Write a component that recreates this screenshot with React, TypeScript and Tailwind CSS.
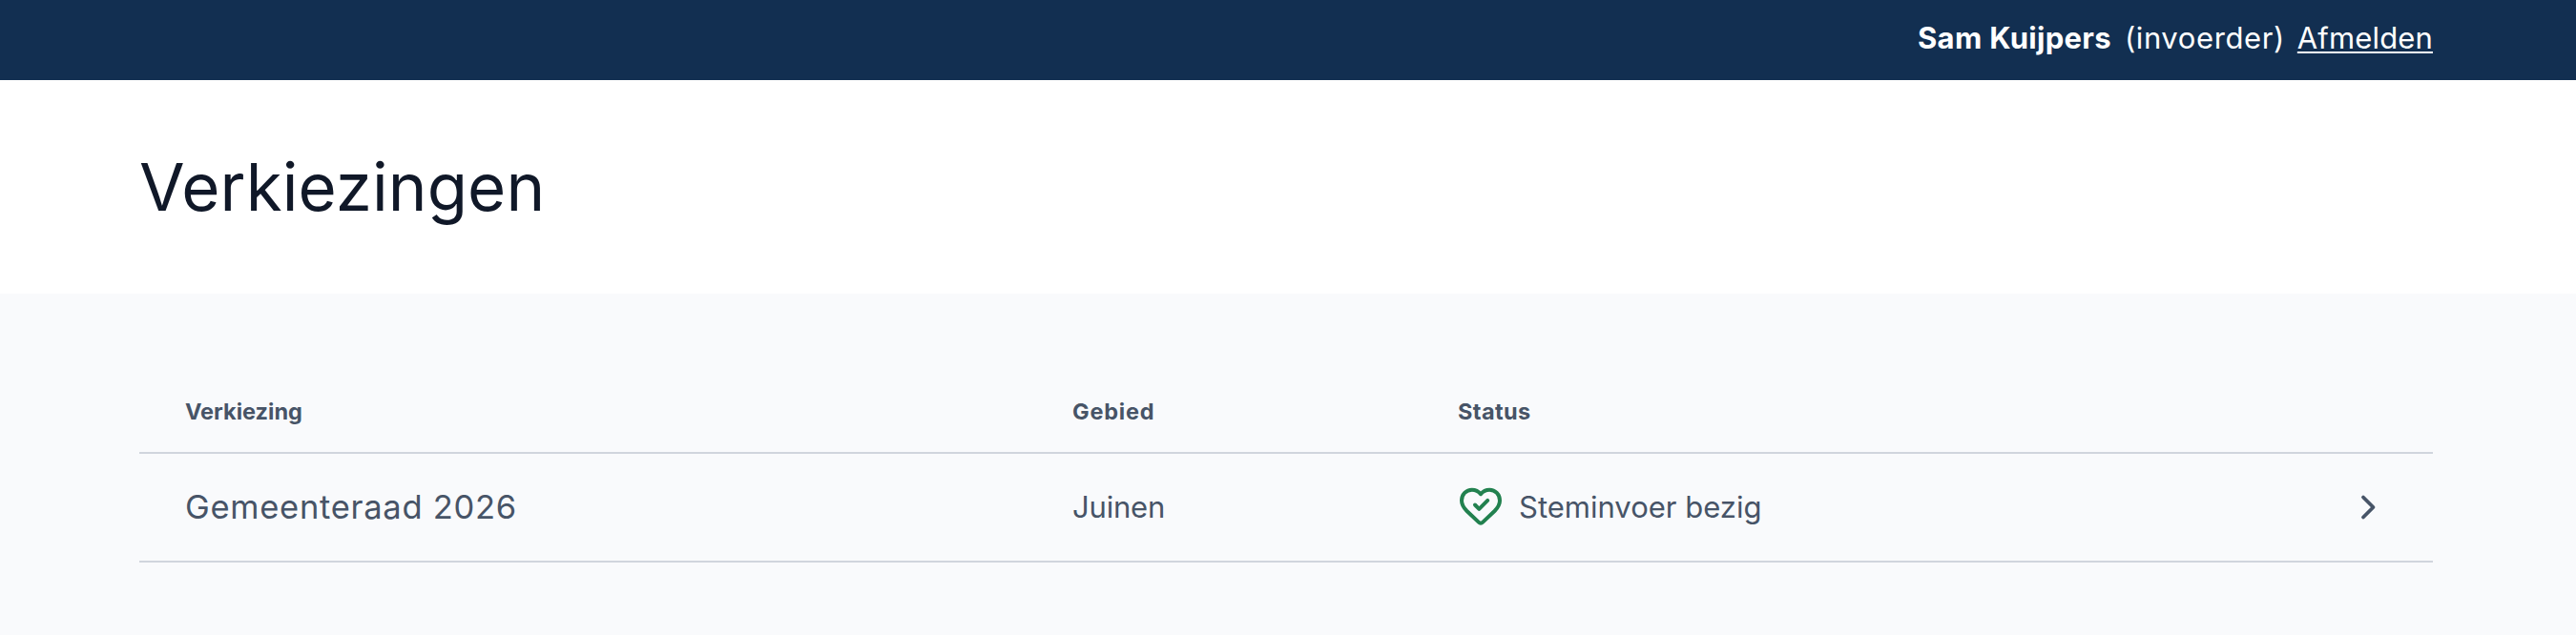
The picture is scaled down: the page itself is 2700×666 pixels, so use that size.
const lines = "border-[#d0d5dd]";

function HeartCheckIcon() {
  return (
    <svg width="48" height="48" viewBox="0 0 48 48" fill="none" stroke="#22814f" strokeWidth="4" strokeLinecap="round" strokeLinejoin="round" aria-hidden="true">
      <path d="M24 10.2C21.6 7.2 18.3 5.7 14.8 5.7C8.8 5.7 4 10.6 4 17C4 21.5 6 24.5 9.5 28L21.8 39.6C23.2 41 24.8 41 26.2 39.6L38.5 28C42 24.5 44 21.5 44 17C44 10.6 39.2 5.7 33.2 5.7C29.7 5.7 26.4 7.2 24 10.2Z" />
      <path d="M18 21.5L22.3 25.8L31.2 16.9" />
    </svg>
  );
}

function ChevronIcon() {
  return (
    <svg width="48" height="48" viewBox="0 0 48 48" fill="none" stroke="#475467" strokeWidth="3.8" strokeLinecap="round" strokeLinejoin="round" aria-hidden="true">
      <path d="M19 13.5L29.5 24L19 34.5" />
    </svg>
  );
}

export default function App() {
  return (
    <div className="flex h-[666px] w-[2700px] flex-col overflow-hidden bg-[#f9fafc] font-['Inter',sans-serif] text-[#475467]">
      <nav className="flex h-[84px] items-center justify-end bg-[#122f51] pr-[150px] pb-1 text-[31px] leading-10 text-white">
        <strong className="mr-[14px] font-bold tracking-[0.3px]">Sam Kuijpers</strong>
        <span className="mr-[13px] tracking-[0.6px]">(invoerder)</span>
        <a href="#" className="tracking-[0.15px] underline decoration-2 underline-offset-[3px] [text-decoration-skip-ink:none]">Afmelden</a>
      </nav>
      <header className="flex h-[224px] items-center bg-white pl-[146px]">
        <h1 className="text-[69px] leading-none tracking-[0.1px] text-[#101828]">Verkiezingen</h1>
      </header>
      <main className="px-[146px] pr-[150px] pt-[82px]">
        <table className="w-full table-fixed border-collapse text-left">
          <colgroup>
            <col className="w-[978px]" />
            <col className="w-[404px]" />
            <col />
            <col className="w-[116px]" />
          </colgroup>
          <thead>
            <tr className={`h-[85px] border-b-2 text-[23.5px] ${lines}`}>
              <th className="p-0 pl-12 font-bold">Verkiezing</th>
              <th className="p-0 font-bold tracking-[0.8px]">Gebied</th>
              <th className="p-0 font-bold tracking-[0.4px]">Status</th>
              <th className="p-0" />
            </tr>
          </thead>
          <tbody>
            <tr className={`h-[114px] border-b-2 text-[31px] ${lines}`}>
              <td className="p-0 pl-12 text-[34.5px] tracking-[0.72px]">Gemeenteraad 2026</td>
              <td className="p-0 tracking-[-0.2px]">Juinen</td>
              <td className="p-0">
                <span className="flex items-center gap-4">
                  <HeartCheckIcon />
                  <span>Steminvoer bezig</span>
                </span>
              </td>
              <td className="p-0 pl-6">
                <ChevronIcon />
              </td>
            </tr>
          </tbody>
        </table>
      </main>
    </div>
  );
}
